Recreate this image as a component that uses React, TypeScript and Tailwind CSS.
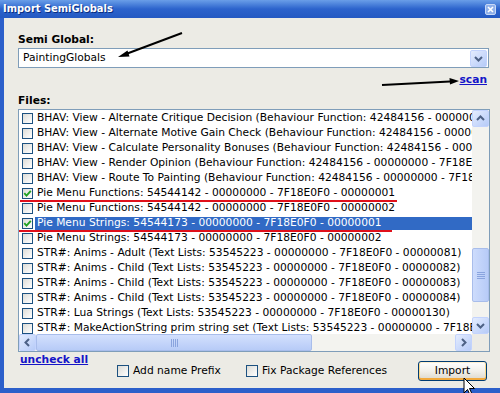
import React from "react";

type Row = {
  text: string;
  checked?: boolean;
  selected?: boolean;
  mark?: string;
};

const rows: Row[] = [
  { text: "BHAV: View - Alternate Critique Decision (Behaviour Function: 42484156 - 00000000 - 7F18E0F0 - 00001001)" },
  { text: "BHAV: View - Alternate Motive Gain Check (Behaviour Function: 42484156 - 00000000 - 7F18E0F0 - 00001002)" },
  { text: "BHAV: View - Calculate Personality Bonuses (Behaviour Function: 42484156 - 00000000 - 7F18E0F0 - 00001003)" },
  { text: "BHAV: View - Render Opinion (Behaviour Function: 42484156 - 00000000 - 7F18E0F0 - 00001004)" },
  { text: "BHAV: View - Route To Painting (Behaviour Function: 42484156 - 00000000 - 7F18E0F0 - 00001005)" },
  { text: "Pie Menu Functions: 54544142 - 00000000 - 7F18E0F0 - 00000001", checked: true, mark: "left-[1px] w-[377px]" },
  { text: "Pie Menu Functions: 54544142 - 00000000 - 7F18E0F0 - 00000002" },
  { text: "Pie Menu Strings: 54544173 - 00000000 - 7F18E0F0 - 00000001", checked: true, selected: true, mark: "-left-px w-[374px]" },
  { text: "Pie Menu Strings: 54544173 - 00000000 - 7F18E0F0 - 00000002" },
  { text: "STR#: Anims - Adult (Text Lists: 53545223 - 00000000 - 7F18E0F0 - 00000081)" },
  { text: "STR#: Anims - Child (Text Lists: 53545223 - 00000000 - 7F18E0F0 - 00000082)" },
  { text: "STR#: Anims - Child (Text Lists: 53545223 - 00000000 - 7F18E0F0 - 00000083)" },
  { text: "STR#: Anims - Child (Text Lists: 53545223 - 00000000 - 7F18E0F0 - 00000084)" },
  { text: "STR#: Lua Strings (Text Lists: 53545223 - 00000000 - 7F18E0F0 - 00000130)" },
  { text: "STR#: MakeActionString prim string set (Text Lists: 53545223 - 00000000 - 7F18E0F0 - 00000085)" },
];

function XpCheck({ checked, big }: { checked?: boolean; big?: boolean }) {
  return (
    <span
      className={`flex shrink-0 items-center justify-center border border-[#1c5180] bg-linear-to-br from-[#dcdcd7] to-white ${
        big ? "h-[12px] w-[12px]" : "h-[11px] w-[11px]"
      }`}
    >
      {checked && (
        <svg width="9" height="9" viewBox="0 0 9 9">
          <path d="M1.3 4.2 L3.5 6.6 L7.8 1.8" fill="none" stroke="#21a121" strokeWidth="1.9" />
        </svg>
      )}
    </span>
  );
}

const arrowPts = {
  up: "4,9 7.5,5.5 11,9",
  down: "4,6 7.5,9.5 11,6",
  left: "9,4 5.5,7.5 9,11",
  right: "6,4 9.5,7.5 6,11",
};

function ScrollBtn({ dir }: { dir: "up" | "down" | "left" | "right" }) {
  return (
    <div className="flex h-[17px] w-[17px] shrink-0 items-center justify-center rounded-[2px] border border-[#c3d3fd] bg-linear-to-br from-[#e4ecfe] to-[#b6cbf8]">
      <svg width="15" height="15" viewBox="0 0 15 15">
        <polyline points={arrowPts[dir]} fill="none" stroke="#4d6185" strokeWidth="2" />
      </svg>
    </div>
  );
}

function FileRow({ row }: { row: Row }) {
  return (
    <div className="relative flex h-[15px] items-center whitespace-nowrap pl-[3px]">
      <XpCheck checked={row.checked} />
      <span
        className={`ml-[2px] flex h-[13px] flex-1 items-center pl-[2px] ${
          row.selected ? "bg-[#316ac5] text-white" : "text-black"
        }`}
      >
        {row.text}
      </span>
      {row.mark && <span className={`absolute -bottom-px h-[2px] bg-[#e0101a] ${row.mark}`} />}
    </div>
  );
}

export default function App() {
  return (
    <div className="relative flex h-[393px] w-[500px] flex-col overflow-hidden bg-[#ecebe5] font-['DejaVu_Sans','Liberation_Sans',sans-serif] text-[10.7px] text-black">
      {/* TITLE BAR */}
      <div className="flex h-[18px] shrink-0 items-center justify-between bg-linear-to-b from-[#6a9ee8] via-[#2c63cc] to-[#2459c2] pl-[3px] pr-[4px]">
        <span className="font-['DejaVu_Sans_Condensed','Liberation_Sans',sans-serif] text-[11px] font-bold leading-[18px] text-white [text-shadow:1px_1px_0_#0a2e80]">
          Import SemiGlobals
        </span>
        <span className="flex h-[11px] w-[11px] items-center justify-center rounded-[2px] border border-[#c6d8f7] bg-[#8fb0ea]">
          <svg width="7" height="7" viewBox="0 0 7 7">
            <path d="M1 1 L6 6 M6 1 L1 6" stroke="white" strokeWidth="1.6" />
          </svg>
        </span>
      </div>

      {/* BODY */}
      <div className="flex flex-1 flex-col border-b-[5px] border-l-[4px] border-[#2c5fca] pl-[14px] pt-[15px]">
        <p className="font-bold leading-[14px]">Semi Global:</p>
        <div className="mt-px flex h-[20px] w-[471px] items-center border border-[#7f9db9] bg-white p-px">
          <span className="flex-1 pl-[3px] leading-[16px]">PaintingGlobals</span>
          <ScrollBtn dir="down" />
        </div>
        <div className="mt-[5px] flex w-[471px] justify-end pr-[2px]">
          <span className="font-bold leading-[14px] text-[#1515c8] underline">scan</span>
        </div>
        <p className="mt-[7px] font-bold leading-[14px]">Files:</p>

        {/* FILE LIST */}
        <div className="mt-px flex h-[243px] w-[472px] flex-col border border-[#7f9db9] bg-white">
          <div className="flex h-[224px]">
            <div className="flex-1 overflow-hidden pt-px">
              {rows.map((r, i) => (
                <FileRow key={i} row={r} />
              ))}
            </div>
            <div className="flex w-[17px] flex-col bg-[#f3f3ef]">
              <ScrollBtn dir="up" />
              <div className="h-[121px]" />
              <div className="flex h-[54px] items-center justify-center rounded-[2px] border border-[#a8bdeb] bg-linear-to-r from-[#cddcfc] to-[#b7cbf7]">
                <svg width="8" height="7" viewBox="0 0 8 7">
                  <path d="M0 0.5 H8 M0 2.5 H8 M0 4.5 H8 M0 6.5 H8" stroke="#8aa4de" strokeWidth="1" />
                </svg>
              </div>
              <div className="flex-1" />
              <ScrollBtn dir="down" />
            </div>
          </div>
          <div className="flex h-[17px]">
            <div className="flex flex-1 bg-[#f3f3ef]">
              <ScrollBtn dir="left" />
              <div className="flex w-[276px] items-center justify-center rounded-[2px] border border-[#a8bdeb] bg-linear-to-b from-[#d3e0fd] to-[#b7cbf7]">
                <svg width="7" height="8" viewBox="0 0 7 8">
                  <path d="M0.5 0 V8 M2.5 0 V8 M4.5 0 V8 M6.5 0 V8" stroke="#8aa4de" strokeWidth="1" />
                </svg>
              </div>
              <div className="flex-1" />
              <ScrollBtn dir="right" />
            </div>
            <div className="w-[17px] bg-[#ecebe5]" />
          </div>
        </div>

        {/* BOTTOM */}
        <div className="flex items-start">
          <div className="w-[99px] pl-[2px]">
            <span className="font-bold leading-[13px] text-[#1515c8] underline">uncheck all</span>
          </div>
          <label className="mt-[13px] flex w-[129px] items-center gap-[4px] leading-[12px]">
            <XpCheck big />
            Add name Prefix
          </label>
          <label className="mt-[13px] flex w-[172px] items-center gap-[4px] leading-[12px]">
            <XpCheck big />
            Fix Package References
          </label>
          <button className="mt-[9px] flex h-[20px] w-[69px] items-center justify-center rounded-[3px] border border-[#003c74] bg-linear-to-b from-white via-[#f2f0ea] to-[#dcd7cb] shadow-[inset_0_1px_0_#fff0cf,inset_0_-2px_0_#f2a93c,inset_1px_0_0_#fbd889,inset_-1px_0_0_#fbd889]">
            Import
          </button>
        </div>
      </div>

      {/* ANNOTATIONS */}
      <svg className="pointer-events-none absolute left-0 top-0" width="500" height="393" viewBox="0 0 500 393">
        <line x1="182" y1="33" x2="126" y2="54" stroke="black" strokeWidth="2" />
        <polygon points="118,57 127.5,50.5 129.5,56.5" fill="black" />
        <line x1="382" y1="85" x2="450" y2="81.5" stroke="black" strokeWidth="2" />
        <polygon points="459,81 449.5,78 450,84.5" fill="black" />
        <g transform="translate(464 378)">
          <path d="M0 0 L0 15 L3.5 11.5 L6.5 18 L8.5 17 L5.5 10.5 L10.5 10.5 Z" fill="white" stroke="black" strokeWidth="1" />
        </g>
      </svg>
    </div>
  );
}
